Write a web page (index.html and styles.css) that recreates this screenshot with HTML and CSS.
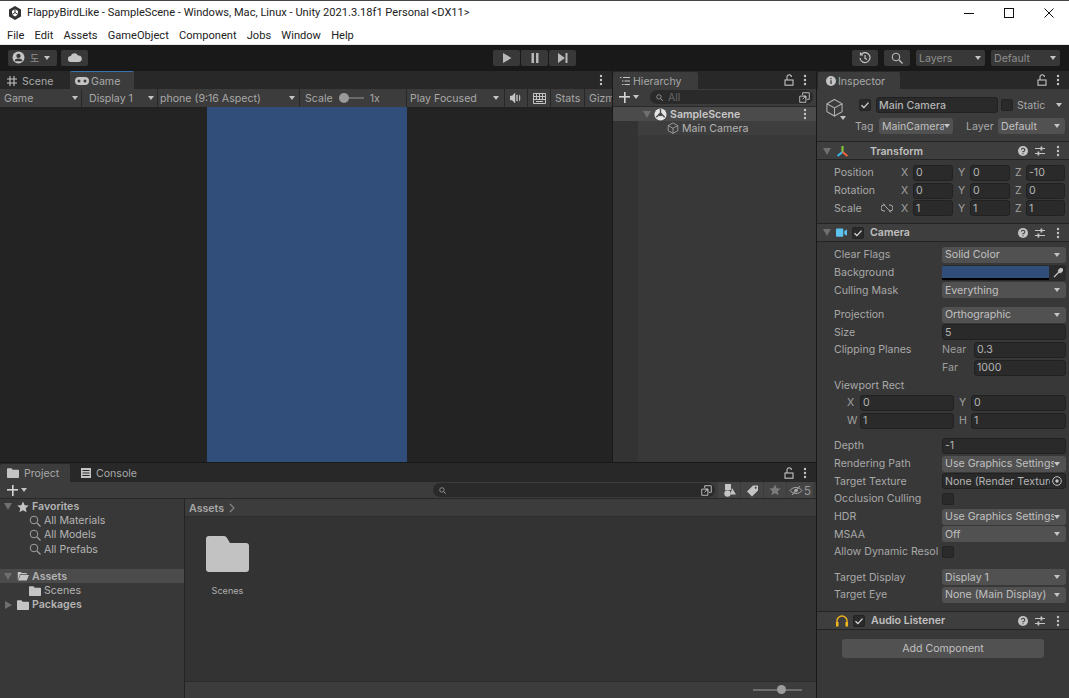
FILE: index.html
```html
<!DOCTYPE html>
<html lang="en">
<head>
<meta charset="utf-8">
<title>Unity</title>
<link rel="stylesheet" href="styles.css">
</head>
<body>
<svg class="defs" width="0" height="0">
  <defs>
    <symbol id="dots" viewBox="0 0 4 12"><circle cx="2" cy="2" r="1.2"/><circle cx="2" cy="6" r="1.2"/><circle cx="2" cy="10" r="1.2"/></symbol>
    <symbol id="lock" viewBox="0 0 10 12"><rect x="1" y="6" width="8" height="5.2" fill="none" stroke="currentColor" stroke-width="1.1"/><path d="M3 6V3a2.2 2.2 0 0 1 4.4 0" fill="none" stroke="currentColor" stroke-width="1.1"/></symbol>
    <symbol id="cube" viewBox="0 0 20 20"><path d="M10 1.5 18 6v8.500L10 19l-8-4.500V6zM2 6l8 4.500L18 6M10 10.500V19" fill="none" stroke="currentColor" stroke-width="1.1"/></symbol>
    <symbol id="folder" viewBox="0 0 16 13"><path d="M1 0h5l1.500 2H15a1 1 0 0 1 1 1v9a1 1 0 0 1-1 1H1a1 1 0 0 1-1-1V1a1 1 0 0 1 1-1z"/></symbol>
    <symbol id="lens" viewBox="0 0 12 12"><circle cx="5" cy="5" r="3.800" fill="none" stroke="currentColor" stroke-width="1"/><path d="m8 8 3.500 3.500" stroke="currentColor" stroke-width="1.300"/></symbol>
    <symbol id="help" viewBox="0 0 10 10"><circle cx="5" cy="5" r="5"/><path d="M3.400 3.800A1.700 1.600 0 1 1 5 5.500V6.300M5 7.200v1" fill="none" stroke="#3e3e3e" stroke-width="1.100"/></symbol>
    <symbol id="sliders" viewBox="0 0 10 10"><path d="M0 2.500h10M0 7.500h10" stroke="currentColor" stroke-width="1"/><rect x="5.500" y="0.500" width="1.800" height="4"/><rect x="2.500" y="5.500" width="1.800" height="4"/></symbol>
    <symbol id="check" viewBox="0 0 10 10"><path d="m1.500 5.200 2.400 2.400 4.600-5" fill="none" stroke="currentColor" stroke-width="1.300"/></symbol>
    <symbol id="star" viewBox="0 0 12 12"><path d="m6 .5 1.700 3.700 4 .4-3 2.700.9 4L6 9.200l-3.600 2.100.9-4-3-2.700 4-.4z"/></symbol>
    <symbol id="popout" viewBox="0 0 12 12"><path d="M4 3.500V.8h7.200V8H8.500M.8 4.500h6.700v6.700H.8zM4 8l3-3.500M5 4.500h2.500V7" fill="none" stroke="currentColor" stroke-width="1"/></symbol>
  </defs>
</svg>

<div class="app">
  <header class="titlebar">
    <svg class="unity-logo" viewBox="0 0 14 14"><path d="M7 0 13 3.500v7L7 14 1 10.500v-7z" fill="#333"/><path d="M7 3 10 5v3.500L7 10.500 4 8.500V5z" fill="#fff"/><path d="M7 3v3.500L4 8.500M7 6.500l3 2" stroke="#333" fill="none"/></svg>
    <span class="title-text">FlappyBirdLike - SampleScene - Windows, Mac, Linux - Unity 2021.3.18f1 Personal &lt;DX11&gt;</span>
    <div class="win-controls">
      <svg class="win-btn" viewBox="0 0 10 10"><path d="M0 5.500h10" stroke="#111" stroke-width="1"/></svg>
      <svg class="win-btn" viewBox="0 0 10 10"><rect x=".5" y=".5" width="9" height="9" fill="none" stroke="#111"/></svg>
      <svg class="win-btn" viewBox="0 0 10 10"><path d="m.5.500 9 9M9.500.500l-9 9" stroke="#111"/></svg>
    </div>
  </header>
  <nav class="menubar">
    <span>File</span><span>Edit</span><span>Assets</span><span>GameObject</span><span>Component</span><span>Jobs</span><span>Window</span><span>Help</span>
  </nav>

  <div class="toolbar">
    <div class="tb-left">
      <div class="tb-btn account">
        <svg class="ic13" viewBox="0 0 12 12"><circle cx="6" cy="6" r="5.500" fill="#c4c4c4"/><circle cx="6" cy="4.500" r="2" fill="#383838"/><path d="M2.500 9.500a3.500 2.500 0 0 1 7 0" fill="#383838"/></svg>
        <span class="tb-ko">도</span><i class="caret"></i>
      </div>
      <div class="tb-btn cloud">
        <svg class="ic-cloud" viewBox="0 0 14 9"><path d="M3 9a3 3 0 0 1-.300-6A4 4 0 0 1 10 2.500 3.200 3.200 0 0 1 11 9z" fill="#c4c4c4"/></svg>
      </div>
    </div>
    <div class="tb-play">
      <div class="tb-btn play"><svg class="ic10" viewBox="0 0 10 10"><path d="M1 0v10l8.500-5z" fill="#b8b8b8"/></svg></div>
      <div class="tb-btn play"><svg class="ic10" viewBox="0 0 10 10"><path d="M1.500 0h2.500v10H1.500zM6 0h2.500v10H6z" fill="#b8b8b8"/></svg></div>
      <div class="tb-btn play"><svg class="ic10" viewBox="0 0 10 10"><path d="M0 0v10l7-5zM7.500 0H9.500v10H7.500z" fill="#b8b8b8"/></svg></div>
    </div>
    <div class="tb-right">
      <div class="tb-btn square"><svg class="ic12" viewBox="0 0 12 12"><path d="M2 2.500A5 5 0 1 1 1 6M1.500.5v2.500H4M6 3v3.300L8 7.500" fill="none" stroke="#c4c4c4" stroke-width="1.200"/></svg></div>
      <div class="tb-btn square search-btn"><svg class="ic12 c-light"><use href="#lens"/></svg></div>
      <div class="tb-btn drop layers"><span>Layers</span><i class="caret"></i></div>
      <div class="tb-btn drop layout"><span>Default</span><i class="caret"></i></div>
    </div>
  </div>

  <main class="workspace">
    <div class="left-col">
      <div class="top-row">
      <section class="panel game-panel">
        <div class="tabstrip">
          <div class="tab scene-tab">
            <svg class="ic10" viewBox="0 0 10 10"><path d="M3 0v10M7 0v10M0 3h10M0 7h10" stroke="#c4c4c4" stroke-width="1.100"/></svg><span>Scene</span>
          </div>
          <div class="tab active game-tab">
            <svg class="ic-pad" viewBox="0 0 14 8"><rect width="14" height="8" rx="4" fill="#c4c4c4"/><circle cx="4" cy="4" r="1.500" fill="#3c3c3c"/><circle cx="10" cy="4" r="1.500" fill="#3c3c3c"/></svg><span>Game</span>
          </div>
          <div class="spacer"></div>
          <svg class="ic-dots"><use href="#dots"/></svg>
        </div>
        <div class="game-bar">
          <div class="gb w-game"><span>Game</span><i class="caret"></i></div>
          <div class="gb w-display"><span>Display 1</span><i class="caret"></i></div>
          <div class="gb w-aspect"><span>phone (9:16 Aspect)</span><i class="caret"></i></div>
          <div class="gb w-scale"><span>Scale</span><span class="scale-track"><i class="scale-knob"></i></span><span class="scale-val">1x</span></div>
          <div class="gb w-focus"><span>Play Focused</span><i class="caret"></i></div>
          <div class="gb w-audio"><svg class="ic12" viewBox="0 0 12 10"><path d="M0 3h2l3-3v10L2 7H0zM6.500 2v6h1V2zM9 1.500c1.500 2 1.500 5 0 7" fill="#c4c4c4" stroke="#c4c4c4" stroke-width=".4"/></svg></div>
          <div class="gb w-keys"><svg class="ic13" viewBox="0 0 13 11"><path d="M.5.500h12v10H.5zM.5 3.500h12M.5 6.500h12M3.500.500v6M6.500.500v6M9.500.500v6M3 8.500h7" fill="none" stroke="#c4c4c4"/></svg></div>
          <div class="gb w-stats"><span>Stats</span></div>
          <div class="gb w-gizmos"><span>Gizmos</span></div>
        </div>
        <div class="game-view"><div class="game-screen"></div></div>
      </section>

      <section class="panel hierarchy">
        <div class="tabstrip">
          <div class="tab active hier-tab">
            <svg class="ic10" viewBox="0 0 10 10"><path d="M0 1.500h1.500M3 1.500h7M2 5h1.500M4.500 5H10M2 8.500h1.500M4.500 8.500H10" stroke="#c4c4c4"/></svg><span>Hierarchy</span>
          </div>
          <div class="spacer"></div>
          <svg class="ic-lock"><use href="#lock"/></svg>
          <svg class="ic-dots"><use href="#dots"/></svg>
        </div>
        <div class="hier-bar">
          <div class="plus-drop"><span class="plus"></span><i class="caret"></i></div>
          <div class="search hier-search">
            <svg class="ic-search-small c-light"><use href="#lens"/></svg>
            <span class="ph">All</span>
            <div class="spacer"></div>
            <svg class="ic-pop"><use href="#popout"/></svg>
          </div>
        </div>
        <div class="hier-body">
          <div class="scene-row">
            <i class="tri down dim"></i>
            <svg class="ic13" viewBox="0 0 14 14"><circle cx="7" cy="7" r="6.500" fill="#e6e6e6"/><path d="M7 1v4.500M7 5.500 2.500 10M7 5.500l4.500 4.500" stroke="#4b4b4b" stroke-width="1.500"/><circle cx="7" cy="7" r="2" fill="#4b4b4b"/></svg>
            <span>SampleScene</span>
            <div class="spacer"></div>
            <svg class="ic-dots"><use href="#dots"/></svg>
          </div>
          <div class="obj-row">
            <svg class="ic12 c-light"><use href="#cube"/></svg><span>Main Camera</span>
          </div>
        </div>
      </section>
      </div>

      <section class="panel project-panel">
        <div class="tabstrip">
          <div class="tab active project-tab">
            <svg class="ic-folder c-light"><use href="#folder"/></svg><span>Project</span>
          </div>
          <div class="tab console-tab">
            <svg class="ic10" viewBox="0 0 10 10"><path d="M0 0h10v10H0z" fill="#c4c4c4"/><path d="M1.500 2.500h7M1.500 5h7M1.500 7.500h7" stroke="#2a2a2a"/></svg><span>Console</span>
          </div>
          <div class="spacer"></div>
          <svg class="ic-lock"><use href="#lock"/></svg>
          <svg class="ic-dots"><use href="#dots"/></svg>
        </div>
        <div class="project-bar">
          <div class="plus-drop"><span class="plus"></span><i class="caret"></i></div>
          <div class="spacer"></div>
          <div class="search project-search">
            <svg class="ic-search-small c-light"><use href="#lens"/></svg>
            <div class="spacer"></div>
            <svg class="ic-pop"><use href="#popout"/></svg>
          </div>
          <div class="pb-btn"><svg class="ic13" viewBox="0 0 13 13"><rect x="2" y="0" width="6" height="6" fill="#c4c4c4"/><circle cx="4.500" cy="9.500" r="3.200" fill="#c4c4c4"/><path d="m9 4 4 6.500H7.500z" fill="#c4c4c4"/></svg></div>
          <div class="pb-btn"><svg class="ic13" viewBox="0 0 13 13"><path d="M7 1.500h5v5l-6 6-5-5z" fill="#c4c4c4"/><circle cx="9.700" cy="3.700" r="1" fill="#3c3c3c"/></svg></div>
          <div class="pb-btn"><svg class="ic12 c-dim"><use href="#star"/></svg></div>
          <div class="pb-btn wide"><svg class="ic-eye" viewBox="0 0 14 11"><path d="M1 5.500C4 1.500 10 1.500 13 5.500 10 9.500 4 9.500 1 5.500zM3 10 11 1" fill="none" stroke="#aaa"/><circle cx="7" cy="5.500" r="1.800" fill="#aaa"/></svg><span>5</span></div>
        </div>
        <div class="project-body">
          <aside class="tree">
            <div class="tree-row bold"><i class="tri down"></i><svg class="ic-star c-light"><use href="#star"/></svg><span>Favorites</span></div>
            <div class="tree-row sub"><svg class="ic12 c-mid"><use href="#lens"/></svg><span>All Materials</span></div>
            <div class="tree-row sub"><svg class="ic12 c-mid"><use href="#lens"/></svg><span>All Models</span></div>
            <div class="tree-row sub"><svg class="ic12 c-mid"><use href="#lens"/></svg><span>All Prefabs</span></div>
            <div class="tree-gap"></div>
            <div class="tree-row bold selected"><i class="tri down"></i>
              <svg class="ic-folder" viewBox="0 0 16 13"><path d="M1 1h4l1.500 1.500H13V4H4L1 12zM4.500 5H16l-3 7.500H1.500z" fill="#c4c4c4"/></svg><span>Assets</span></div>
            <div class="tree-row sub"><svg class="ic-folder c-light"><use href="#folder"/></svg><span>Scenes</span></div>
            <div class="tree-row bold"><i class="tri right"></i><svg class="ic-folder c-light"><use href="#folder"/></svg><span>Packages</span></div>
          </aside>
          <div class="browser">
            <div class="crumb"><span>Assets</span><svg class="ic-chev" viewBox="0 0 6 10"><path d="m1 1 4 4-4 4" fill="none" stroke="#8a8a8a" stroke-width="1.100"/></svg></div>
            <div class="files">
              <div class="file">
                <svg class="big-folder" viewBox="0 0 43 36"><path d="M3 0h15q2 0 3 2l3 5h16q3 0 3 3v23q0 3-3 3H3q-3 0-3-3V3q0-3 3-3z" fill="#c2c2c2"/></svg>
                <span>Scenes</span>
              </div>
            </div>
            <div class="statusbar"><div class="zoom-track"><i class="zoom-knob"></i></div></div>
          </div>
        </div>
      </section>
    </div>

    <section class="panel inspector">
      <div class="tabstrip">
        <div class="tab active insp-tab">
          <svg class="ic10" viewBox="0 0 10 10"><circle cx="5" cy="5" r="5" fill="#c4c4c4"/><path d="M5 2v1.300M5 4.300V8" stroke="#3c3c3c" stroke-width="1.300"/></svg><span>Inspector</span>
        </div>
        <div class="spacer"></div>
        <svg class="ic-lock"><use href="#lock"/></svg>
        <svg class="ic-dots"><use href="#dots"/></svg>
      </div>

      <div class="go-header">
        <div class="go-icon">
          <svg class="go-cube"><use href="#cube"/></svg>
          <i class="caret go-caret"></i>
        </div>
        <div class="go-main">
          <div class="go-line1">
            <label class="cb"><svg class="ic-check"><use href="#check"/></svg></label>
            <div class="field name-field">Main Camera</div>
            <label class="cb static-cb"></label>
            <span class="lbl static-lbl">Static</span>
            <i class="caret"></i>
          </div>
          <div class="go-line2">
            <span class="lbl tag-lbl">Tag</span>
            <div class="dd tag-dd"><span>MainCamera</span><i class="caret"></i></div>
            <span class="lbl layer-lbl">Layer</span>
            <div class="dd layer-dd"><span>Default</span><i class="caret"></i></div>
          </div>
        </div>
      </div>

      <div class="comp-head">
        <i class="tri down dim"></i>
        <svg class="ic-gizmo" viewBox="0 0 13 13"><path d="M6.500 7V1" stroke="#7fc23c" stroke-width="2.200"/><path d="m6.500 7-5 4" stroke="#35b6e8" stroke-width="2.200"/><path d="m6.500 7 5 4" stroke="#e8643c" stroke-width="2.200"/></svg>
        <span class="comp-title transform-title">Transform</span>
        <div class="spacer"></div>
        <svg class="ic-help"><use href="#help"/></svg><svg class="ic-slid"><use href="#sliders"/></svg><svg class="ic-dots"><use href="#dots"/></svg>
      </div>
      <div class="comp-body transform-body">
        <div class="row xyz"><span class="lbl prop">Position</span><span class="axis">X</span><div class="field f40">0</div><span class="axis">Y</span><div class="field f40">0</div><span class="axis">Z</span><div class="field f40">-10</div></div>
        <div class="row xyz"><span class="lbl prop">Rotation</span><span class="axis">X</span><div class="field f40">0</div><span class="axis">Y</span><div class="field f40">0</div><span class="axis">Z</span><div class="field f40">0</div></div>
        <div class="row xyz"><span class="lbl prop scale-prop">Scale<svg class="ic-link" viewBox="0 0 12 10"><path d="M4 2H3a3 3 0 0 0 0 6h1M8 2h1a3 3 0 0 1 0 6H8M2 .5l8 9" fill="none" stroke="#aaa"/></svg></span><span class="axis">X</span><div class="field f40">1</div><span class="axis">Y</span><div class="field f40">1</div><span class="axis">Z</span><div class="field f40">1</div></div>
      </div>

      <div class="comp-head">
        <i class="tri down dim"></i>
        <svg class="ic-cam" viewBox="0 0 12 9"><rect width="8" height="9" rx="1" fill="#5cc3ef"/><path d="M9 3l3-2v7L9 6z" fill="#5cc3ef"/></svg>
        <label class="cb small"><svg class="ic-check"><use href="#check"/></svg></label>
        <span class="comp-title">Camera</span>
        <div class="spacer"></div>
        <svg class="ic-help"><use href="#help"/></svg><svg class="ic-slid"><use href="#sliders"/></svg><svg class="ic-dots"><use href="#dots"/></svg>
      </div>
      <div class="comp-body camera-body">
        <div class="row"><span class="lbl prop">Clear Flags</span><div class="dd grow"><span>Solid Color</span><i class="caret"></i></div></div>
        <div class="row"><span class="lbl prop">Background</span><div class="color-field"><div class="swatch"></div><svg class="ic-drop" viewBox="0 0 10 10"><path d="M1 9 6 4M5 2.500l2.500 2.500M6 2l2-2 2 2-2 2z" stroke="#c4c4c4" stroke-width="1.300" fill="#c4c4c4"/></svg></div></div>
        <div class="row"><span class="lbl prop">Culling Mask</span><div class="dd grow"><span>Everything</span><i class="caret"></i></div></div>
        <div class="gap6"></div>
        <div class="row"><span class="lbl prop">Projection</span><div class="dd grow"><span>Orthographic</span><i class="caret"></i></div></div>
        <div class="row"><span class="lbl prop">Size</span><div class="field grow">5</div></div>
        <div class="row"><span class="lbl prop">Clipping Planes</span><span class="lbl sublbl">Near</span><div class="field grow">0.3</div></div>
        <div class="row"><span class="lbl prop"></span><span class="lbl sublbl">Far</span><div class="field grow">1000</div></div>
        <div class="row"><span class="lbl">Viewport Rect</span></div>
        <div class="row vp"><span class="axis vp-a">X</span><div class="field vpf">0</div><span class="axis vp-b">Y</span><div class="field vpf">0</div></div>
        <div class="row vp"><span class="axis vp-a">W</span><div class="field vpf">1</div><span class="axis vp-b">H</span><div class="field vpf">1</div></div>
        <div class="gap7"></div>
        <div class="row"><span class="lbl prop">Depth</span><div class="field grow">-1</div></div>
        <div class="row"><span class="lbl prop">Rendering Path</span><div class="dd grow"><span>Use Graphics Settings</span><i class="caret"></i></div></div>
        <div class="row"><span class="lbl prop">Target Texture</span><div class="field grow obj-field"><span>None (Render Texture)</span><svg class="ic-target" viewBox="0 0 10 10"><circle cx="5" cy="5" r="4.300" fill="none" stroke="#c4c4c4"/><circle cx="5" cy="5" r="1.700" fill="#c4c4c4"/></svg></div></div>
        <div class="row"><span class="lbl prop">Occlusion Culling</span><label class="cb"></label></div>
        <div class="row"><span class="lbl prop">HDR</span><div class="dd grow"><span>Use Graphics Settings</span><i class="caret"></i></div></div>
        <div class="row"><span class="lbl prop">MSAA</span><div class="dd grow"><span>Off</span><i class="caret"></i></div></div>
        <div class="row"><span class="lbl prop clip">Allow Dynamic Resolution</span><label class="cb"></label></div>
        <div class="gap7"></div>
        <div class="row"><span class="lbl prop">Target Display</span><div class="dd grow"><span>Display 1</span><i class="caret"></i></div></div>
        <div class="row"><span class="lbl prop">Target Eye</span><div class="dd grow"><span>None (Main Display)</span><i class="caret"></i></div></div>
      </div>

      <div class="comp-head audio-head">
        <svg class="ic-phones" viewBox="0 0 12 12"><path d="M1 10V6a5 5 0 0 1 10 0v4" fill="none" stroke="#f2b51c" stroke-width="1.400"/><rect x="0" y="7" width="2.500" height="4.500" fill="#f2b51c"/><rect x="9.500" y="7" width="2.500" height="4.500" fill="#f2b51c"/></svg>
        <label class="cb small"><svg class="ic-check"><use href="#check"/></svg></label>
        <span class="comp-title">Audio Listener</span>
        <div class="spacer"></div>
        <svg class="ic-help"><use href="#help"/></svg><svg class="ic-slid"><use href="#sliders"/></svg><svg class="ic-dots"><use href="#dots"/></svg>
      </div>
      <div class="add-wrap"><div class="add-btn">Add Component</div></div>
    </section>
  </main>
</div>
</body>
</html>
```

FILE: styles.css
```css
* { box-sizing: border-box; }
html, body { margin: 0; height: 100%; overflow: hidden; }
body { font-family: Inter, "Noto Sans", sans-serif; font-size: 10.6px; color: #b4b4b4; background: #191919; }
.defs { position: absolute; }
svg { flex: none; display: block; fill: currentColor; }
.app { width: 1069px; height: 698px; display: flex; flex-direction: column; }
.spacer { flex: 1; min-width: 0; }

.titlebar { height: 24px; background: #fff; border-top: 1px solid #444; display: flex; align-items: center; padding-left: 8px; color: #222; font-family: Roboto, sans-serif; font-size: 11.1px; }
.unity-logo { width: 14px; height: 14px; margin-right: 5px; }
.title-text { white-space: nowrap; }
.win-controls { margin-left: auto; display: flex; gap: 30px; padding-right: 15px; }
.win-btn { width: 10px; height: 10px; }
.menubar { height: 21px; background: #fff; display: flex; align-items: center; padding: 3px 0 0 7px; gap: 10.2px; color: #222; font-family: Roboto, sans-serif; font-size: 11.1px; border-bottom: 1px solid #e4e4e4; }

.toolbar { height: 26px; background: #191919; display: flex; align-items: center; padding: 0 9px 1px 8px; }
.tb-left, .tb-play, .tb-right { display: flex; }
.tb-left { width: 485px; gap: 4px; }
.tb-play { gap: 1px; }
.tb-right { margin-left: auto; gap: 6px; }
.tb-btn { height: 16px; background: #383838; border-radius: 2px; display: flex; align-items: center; justify-content: center; }
.tb-btn.account { width: 49px; gap: 5px; justify-content: flex-start; padding-left: 4px; color: #8e8e8e; }
.tb-btn.cloud { width: 27px; }
.tb-btn.play { width: 27px; }
.tb-btn.square { width: 26px; }
.tb-btn.drop { justify-content: space-between; padding: 1px 4px 0 3px; color: #8e8e8e; font-size: 10.6px; }
.layers { width: 69px; }
.layout { width: 69px; }
.tb-ko { font-family: "Noto Sans CJK KR", sans-serif; font-size: 10px; }
.ic10 { width: 10px; height: 10px; }
.ic12 { width: 12px; height: 12px; }
.ic13 { width: 13px; height: 13px; }
.ic-cloud { width: 14px; height: 9px; }
.c-light { color: #c4c4c4; }
.c-mid { color: #a0a0a0; }
.c-dim { color: #7a7a7a; }
.caret { display: block; flex: none; width: 0; height: 0; border: 3.5px solid transparent; border-top: 4px solid #c4c4c4; border-bottom: 0; }

.workspace { flex: 1; display: flex; min-height: 0; gap: 1px; background: #191919; }
.left-col { width: 816px; flex: none; display: flex; flex-direction: column; gap: 1px; }
.top-row { height: 391px; flex: none; display: flex; gap: 1px; }
.panel { display: flex; flex-direction: column; background: #383838; min-width: 0; overflow: hidden; }
.tabstrip { height: 18px; flex: none; background: #282828; display: flex; align-items: flex-end; padding-right: 9px; gap: 0; }
.tabstrip > .ic-lock { align-self: center; margin-right: 9px; }
.tabstrip > .ic-dots { align-self: center; }
.tab { height: 17px; display: flex; align-items: center; gap: 5px; padding: 1px 0 0 7px; color: #a8a8a8; font-size: 10.6px; }
.tab.active { background: #3c3c3c; border-radius: 2px 2px 0 0; }
.ic-dots { width: 4px; height: 12px; color: #c4c4c4; }
.ic-lock { width: 10px; height: 12px; color: #c4c4c4; }

.game-panel { width: 612px; flex: none; }
.scene-tab { width: 70px; }
.game-tab { width: 64px; border-top: 1px solid #3a72b0; height: 18px; gap: 2px; padding-left: 5px; border-radius: 0; }
.ic-pad { width: 14px; height: 8px; }
.game-bar { height: 18px; flex: none; display: flex; gap: 1px; background: #282828; }
.gb { background: #3c3c3c; display: flex; align-items: center; justify-content: space-between; padding: 0 3px 0 4px; color: #a8a8a8; font-size: 10.6px; white-space: nowrap; overflow: hidden; }
.w-game { width: 81px; }
.w-display { width: 75px; padding-left: 7px; }
.w-aspect { width: 141px; padding-left: 2px; padding-right: 4px; }
.w-scale { width: 106px; justify-content: flex-start; padding-left: 5px; }
.scale-track { position: relative; width: 25px; height: 2px; background: #6a6a6a; margin-left: 6px; }
.scale-knob { position: absolute; left: 0; top: -4px; width: 10px; height: 10px; border-radius: 50%; background: #999; }
.scale-val { margin-left: 6px; }
.w-focus { width: 97px; padding-left: 3px; padding-right: 5px; }
.w-audio { width: 22px; justify-content: center; padding: 0; }
.w-keys { width: 22px; justify-content: center; padding: 0; }
.w-stats { width: 33px; }
.w-gizmos { flex: 1; min-width: 0; padding-right: 0; justify-content: flex-start; }
.game-view { flex: 1; background: #232323; display: flex; justify-content: center; }
.game-screen { width: 200px; height: 100%; background: #314d79; margin-left: 1px; }

.project-panel { flex: 1; min-height: 0; }
.project-panel .tabstrip { height: 19px; }
.project-panel .tab { height: 18px; padding-bottom: 1px; }
.project-tab { width: 70px; }
.console-tab { width: 70px; padding-left: 11px; }
.ic-folder { width: 12px; height: 10px; }
.project-bar { height: 17px; flex: none; display: flex; align-items: center; background: #3c3c3c; border-bottom: 1px solid #282828; padding-right: 3px; }
.plus-drop { display: flex; align-items: center; gap: 3px; padding-left: 7px; }
.plus { position: relative; width: 11px; height: 11px; display: block; background: linear-gradient(#d4d4d4, #d4d4d4) center/100% 1.6px no-repeat, linear-gradient(#d4d4d4, #d4d4d4) center/1.600px 100% no-repeat; }
.search { height: 14px; background: #2a2a2a; border-radius: 7px; display: flex; align-items: center; padding: 0 3px 0 6px; color: #777; font-size: 10px; }
.project-search { width: 282px; margin-right: 2px; }
.ic-search-small { width: 7px; height: 7px; margin-right: 5px; }
.ic-pop { width: 11px; height: 11px; color: #c4c4c4; }
.pb-btn { width: 22px; height: 16px; display: flex; align-items: center; justify-content: center; background: #444; margin-left: 1px; color: #999; font-size: 12px; }
.pb-btn.wide { width: 26px; gap: 1px; }
.ic-eye { width: 14px; height: 11px; }
.project-body { flex: 1; display: flex; min-height: 0; gap: 1px; background: #232323; }
.tree { width: 184px; flex: none; background: #383838; padding-top: .5px; }
.tree-row { height: 14.200px; display: flex; align-items: center; color: #b4b4b4; font-size: 10.6px; white-space: nowrap; }
.tree-row.bold { font-weight: 600; padding-left: 4px; gap: 3px; }
.tree-row.bold .tri { margin-right: 2px; }
.tree-row.sub { padding-left: 29px; gap: 3px; font-weight: 400; }
.tree-row.selected { background: #4b4b4b; }
.tree-gap { height: 13px; }
.ic-star { width: 12px; height: 12px; }
.tri { display: block; flex: none; width: 0; height: 0; border-style: solid; border-color: transparent; }
.tri.down { border-width: 7px 4.500px 0; border-top-color: #6f6f6f; }
.tri.right { border-width: 4.500px 0 4.500px 7px; border-left-color: #6f6f6f; margin-left: 1px; }
.browser { flex: 1; min-width: 0; display: flex; flex-direction: column; background: #333; }
.crumb { height: 18px; background: #3c3c3c; display: flex; align-items: center; gap: 5px; padding: 1px 0 0 4px; font-weight: 600; color: #a8a8a8; border-bottom: 1px solid #2e2e2e; }
.ic-chev { width: 6px; height: 10px; }
.files { flex: 1; padding: 19px 0 0 21px; }
.file { width: 43px; display: flex; flex-direction: column; align-items: center; color: #aeaeae; font-size: 9.100px; gap: 13px; }
.big-folder { width: 43px; height: 36px; }
.statusbar { height: 17px; background: #3c3c3c; border-top: 1px solid #2c2c2c; display: flex; align-items: center; justify-content: flex-end; padding-right: 14px; }
.zoom-track { position: relative; width: 49px; height: 2px; background: #6e6e6e; }
.zoom-knob { position: absolute; left: 24px; top: -4px; width: 9px; height: 9px; border-radius: 50%; background: #9c9c9c; }

.hierarchy { flex: 1; }
.hier-tab { width: 85px; gap: 3px; padding-left: 7px; }
.hier-bar { height: 18px; flex: none; background: #3c3c3c; display: flex; align-items: center; gap: 11px; padding: 0 3px 1px 0; border-bottom: 1px solid #2a2a2a; }
.hier-bar .plus-drop { padding-left: 6px; }
.hier-search { flex: 1; min-width: 0; }
.ph { color: #666; font-size: 10.500px; }
.hier-body { flex: 1; background: linear-gradient(to right, #333 25px, #383838 25px); }
.scene-row { height: 14px; background: #4b4b4b; display: flex; align-items: center; padding: 0 9px 0 30px; font-weight: 600; color: #c8c8c8; font-size: 10.6px; gap: 3px; }
.obj-row { height: 14px; margin-left: 25px; background: #3e3e3e; display: flex; align-items: center; padding-left: 29px; gap: 3px; color: #b4b4b4; font-size: 10.6px; }
.scene-row .tri { margin-right: 0; }

.inspector { flex: 1; min-width: 0; }
.insp-tab { width: 82px; margin-left: 1px; gap: 2px; padding-left: 8px; }
.go-header { height: 53px; flex: none; display: flex; padding: 8px 3px 0 8px; background: #3c3c3c; border-bottom: 1px solid #232323; }
.go-icon { position: relative; width: 34px; flex: none; }
.go-cube { width: 19px; height: 21px; color: #b0b0b0; }
.go-caret { position: absolute; left: 15px; top: 19px; }
.go-main { flex: 1; min-width: 0; display: flex; flex-direction: column; gap: 5px; }
.go-line1 { display: flex; align-items: center; height: 16px; }
.go-line1 > .cb { margin-right: 5px; }
.name-field { width: 122px; height: 15px; margin-right: 3px; color: #d2d2d2; font-weight: 500; flex: none; }
.go-line1 > .static-cb { margin-right: 4px; }
.static-lbl { margin-right: 12px; color: #979797; width: 27px; flex: none; }
.go-line2 { display: flex; align-items: center; height: 16px; margin-left: -8px; }
.tag-lbl { width: 28px; padding-left: 4px; color: #979797; flex: none; }
.tag-dd { width: 74px; flex: none; padding-right: 3px; }
.layer-lbl { width: 45px; padding-left: 13px; flex: none; color: #979797; }
.layer-dd { width: 67px; flex: none; padding-right: 5px; }
.lbl { color: #a8a8a8; font-size: 10.6px; white-space: nowrap; }
.field { height: 16px; background: #2a2a2a; border: 1px solid #212121; border-radius: 3px; display: flex; align-items: center; padding: 0 2px; color: #b4b4b4; font-size: 10.6px; white-space: nowrap; overflow: hidden; }
.dd { height: 16px; background: #515151; border-radius: 3px; display: flex; align-items: center; justify-content: space-between; padding: 0 6px 0 3px; color: #c0c0c0; font-size: 10.6px; white-space: nowrap; overflow: hidden; }
.dd > span { min-width: 0; overflow: hidden; flex: 1; }
.dd.tag-dd { padding-right: 3px; }
.dd.layer-dd { padding-right: 5px; }
.cb { width: 12px; height: 12px; flex: none; display: flex; align-items: center; justify-content: center; background: #2a2a2a; border: 1px solid #232323; border-radius: 2px; color: #d8d8d8; }
.ic-check { width: 10px; height: 10px; }

.comp-head { height: 18px; flex: none; background: #3e3e3e; display: flex; align-items: center; padding: 1px 9px 0 6px; border-bottom: 1px solid #232323; gap: 0; }
.comp-head .tri { margin-right: 5px; }
.comp-title { font-weight: 600; color: #c0c0c0; font-size: 10.6px; margin-left: 6px; }
.transform-title { margin-left: 21px; }
.ic-gizmo { width: 13px; height: 13px; }
.ic-cam { width: 11px; height: 9px; margin-right: 5px; }
.ic-help { width: 10px; height: 10px; color: #c4c4c4; margin-right: 7px; }
.ic-slid { width: 10px; height: 10px; color: #c4c4c4; margin-right: 11px; }
.comp-body { background: #383838; border-bottom: 1px solid #232323; flex: none; }
.transform-body { padding: 4px 3px 5.9px 17px; }
.camera-body { padding: 4.1px 3px 7px 17px; }
.row { height: 17.7px; display: flex; align-items: center; min-width: 0; }
.prop { width: 108px; flex: none; }
.row.xyz .prop { width: 66px; }
.scale-prop { display: flex; align-items: center; gap: 19px; }
.ic-link { width: 12px; height: 10px; }
.axis { width: 12px; flex: none; color: #a0a0a0; font-size: 10.6px; padding-left: 1px; }
.row.xyz .axis { width: 13px; padding-left: 1px; }
.row.xyz .field + .axis { width: 17px; padding-left: 5px; }
.f40 { width: 40px; flex: none; }
.row.xyz .field:last-child { width: 39px; }
.row.xyz .field + .axis:nth-last-child(2) { width: 16px; }
.grow { flex: 1; min-width: 0; }
.sublbl { width: 32px; flex: none; color: #9c9c9c; }
.vp { padding-left: 13px; }
.vp-a { width: 13px; padding-left: 0; }
.vpf { width: 94px; flex: none; }
.vp-b { width: 17px; padding-left: 5px; }
.vp .field:last-child { width: 92px; flex: 1; }
.color-field { flex: 1; min-width: 0; height: 16px; display: flex; background: #2a2a2a; border-radius: 2px; align-items: center; }
.swatch { width: 107px; height: 14px; background: #314d79; border-bottom: 2px solid #000; }
.ic-drop { width: 10px; height: 10px; margin-left: 4px; }
.gap6 { height: 6.6px; }
.gap7 { height: 7.5px; }
.obj-field { justify-content: space-between; padding-right: 3px; }
.obj-field > span { flex: 1; min-width: 0; overflow: hidden; }
.ic-target { width: 10px; height: 10px; margin-left: 2px; }
.row > .clip { width: 104px; margin-right: 4px; overflow: hidden; }
.audio-head { padding-left: 19px; }
.ic-phones { width: 12px; height: 12px; margin-right: 5px; }
.add-wrap { flex: 1; background: #383838; padding: 9px 25px 0; }
.add-btn { height: 19px; background: #515151; border-radius: 3px; display: flex; align-items: center; justify-content: center; color: #c0c0c0; font-size: 10.6px; }
```
